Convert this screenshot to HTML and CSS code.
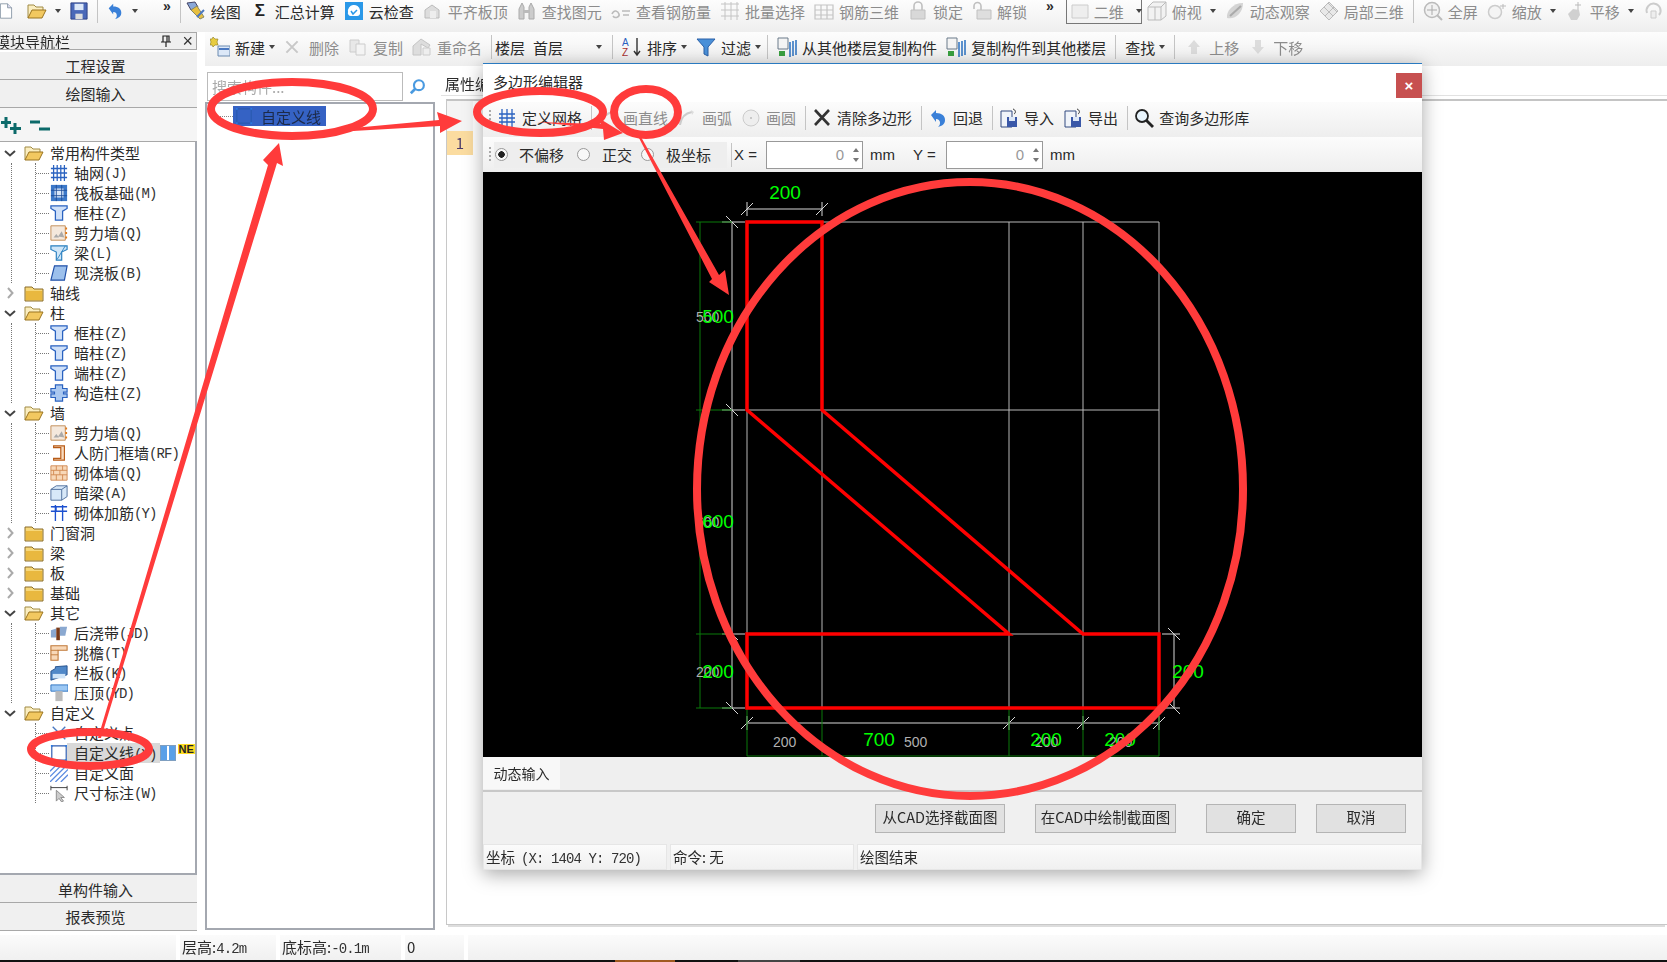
FILE: index.html
```html
<!DOCTYPE html>
<html lang="zh-CN">
<head>
  <meta charset="UTF-8" />
  <title>多边形编辑器</title>
  <link rel="stylesheet" href="styles.css">
</head>
<body>

<!-- icon sheet -->
<svg class="sheet" xmlns="http://www.w3.org/2000/svg">
  <symbol id="folder" viewBox="0 0 20 20"><path d="M1 4h7l2 2h9v12H1z" fill="#f6d77a" stroke="#8a6d2a"/><path d="M2 8h16v9H2z" fill="#e9b83f"/></symbol>
  <symbol id="folder-open" viewBox="0 0 20 20"><path d="M1 17V4h6l2 2h7v3" fill="#fbeec0" stroke="#a08a45"/><path d="M1 17l4-8h14l-4 8z" fill="#f2c860" stroke="#9a7420"/></symbol>
  <symbol id="chev-d" viewBox="0 0 12 12"><path d="M1 4l5 4.500L11 4" fill="none" stroke="#444" stroke-width="2"/></symbol>
  <symbol id="chev-r" viewBox="0 0 12 12"><path d="M4 1l4.500 5L4 11" fill="none" stroke="#aaa" stroke-width="2"/></symbol>
  <symbol id="plus2" viewBox="0 0 20 18"><path d="M5 1v11M0 6.500h10M14 7v11M9 12.500h11" stroke="#0c6a6a" stroke-width="3"/></symbol>
  <symbol id="minus2" viewBox="0 0 20 18"><path d="M0 6h10M9 13h11" stroke="#0c6a6a" stroke-width="3"/></symbol>
  <symbol id="grid" viewBox="0 0 20 20"><path d="M4 1v18M8 1v18M12 1v18M16 1v18M1 5h18M1 10h18M1 15h18" stroke="#2a62c0" stroke-width="1.400"/></symbol>
  <symbol id="raft" viewBox="0 0 20 20"><path d="M1 1h18v18H1z" fill="#3c78c8"/><path d="M5 5h10v10H5z" fill="#d8e6f8"/><path d="M1 7h18M1 13h18M7 1v18M13 1v18" stroke="#1c4c98"/></symbol>
  <symbol id="col" viewBox="0 0 20 20"><path d="M1 2h18v3l-5 3v10H6V8L1 5z" fill="#cfe0f8" stroke="#2a62c0" stroke-width="1.400"/></symbol>
  <symbol id="shear" viewBox="0 0 20 20"><path d="M1 2h16v16H1z" fill="#f4e8dc" stroke="#c08850"/><path d="M4 15l3-4 3 4zM9 14l4-6 3 7z" fill="#aaa"/><path d="M17 5h2M17 10h2M17 15h2" stroke="#e07818" stroke-width="2"/></symbol>
  <symbol id="beam" viewBox="0 0 20 20"><path d="M1 2h18v4l-6 3v9H7V9L1 6z" fill="#cfe6f8" stroke="#2a80c0" stroke-width="1.300"/><path d="M8 17l9-15" stroke="#2a80c0"/></symbol>
  <symbol id="slab" viewBox="0 0 20 20"><path d="M5 2h14l-3 16H1z" fill="#9cc0ec" stroke="#2050a8" stroke-width="1.300"/></symbol>
  <symbol id="cons" viewBox="0 0 20 20"><path d="M6 1h8v4h5v4h-4v2h4v4h-5v4H6v-4H1v-4h4V9H1V5h5z" fill="#aac8f0" stroke="#2a62c0" stroke-width="1.300"/></symbol>
  <symbol id="frame" viewBox="0 0 20 20"><path d="M4 2h12v16H4v-2h8V4H4z" fill="#f8dcc0" stroke="#b85c18" stroke-width="1.300"/></symbol>
  <symbol id="brick" viewBox="0 0 20 20"><path d="M1 2h18v16H1z" fill="#f8d8b8" stroke="#d08850"/><path d="M1 7h18M1 12h18M7 2v5M14 2v5M4 7v5M11 7v5M7 12v6M14 12v6" stroke="#d08850"/></symbol>
  <symbol id="hidden-beam" viewBox="0 0 20 20"><path d="M1 6l6-4h12v12l-6 4H1z" fill="#d8e8f8" stroke="#4a6a98"/><path d="M1 6h12v12M13 6l6-4" fill="none" stroke="#4a6a98"/></symbol>
  <symbol id="rebar" viewBox="0 0 20 20"><path d="M1 3h18M3 8h16M6 1v18M14 1v18M1 8h2" stroke="#1c50d0" stroke-width="1.500" fill="none"/><path d="M3 3h4v5" stroke="#1c50d0" fill="none"/></symbol>
  <symbol id="pour" viewBox="0 0 20 20"><path d="M1 7l6-2v10H1z" fill="#8aa8d0"/><path d="M7 4h4v14H7z" fill="#7a3a18"/><path d="M11 3h8l-2 10h-6z" fill="#8aa8d0"/></symbol>
  <symbol id="eave" viewBox="0 0 20 20"><path d="M1 2h18v5H9v11H1z" fill="#f8d8b8" stroke="#c07838" stroke-width="1.200"/><path d="M1 7h8M1 12h8" stroke="#c07838"/></symbol>
  <symbol id="rail" viewBox="0 0 20 20"><path d="M1 8l5-3v-2l13-1v10L1 18z" fill="#5088c8" stroke="#204c88"/><path d="M3 11h14v5H3z" fill="#cfe4f8"/></symbol>
  <symbol id="cap" viewBox="0 0 20 20"><path d="M1 1h19v7H1z" fill="#9cc8f4" stroke="#2a70c0"/><path d="M6 8h8v11H6z" fill="#bbb"/></symbol>
  <symbol id="pt" viewBox="0 0 20 20"><path d="M3 3l14 14M17 3L3 17" stroke="#4a78c0" stroke-width="1.500"/></symbol>
  <symbol id="shape" viewBox="0 0 20 20"><path d="M2 2h16v16H2z" fill="none" stroke="#2a5ab0" stroke-width="1.300"/><path d="M1 1h2v2H1zM17 1h2v2h-2zM1 17h2v2H1zM17 17h2v2h-2z" fill="#2a7ae0"/></symbol>
  <symbol id="hatch" viewBox="0 0 20 20"><path d="M0 8l8-8M0 14L14 0M0 20L20 0M6 20L20 6M12 20l8-8" stroke="#5a8ae0" stroke-width="1.400"/></symbol>
  <symbol id="dimen" viewBox="0 0 20 20"><path d="M1 2v5M19 2v5M1 4h18" stroke="#333"/><path d="M7 7v12l3-3 3 4 2-1-3-4h4z" fill="#ccc" stroke="#888"/></symbol>
  <symbol id="doc" viewBox="0 0 20 20"><path d="M3 1h9l5 5v13H3z" fill="#fff" stroke="#7a8a9a"/><path d="M12 1v5h5" fill="#dde" stroke="#7a8a9a"/></symbol>
  <symbol id="save" viewBox="0 0 20 20"><path d="M1 1h18v18H1z" fill="#4a68b8" stroke="#2a3c80"/><path d="M5 2h10v7H5z" fill="#dde8f8"/><path d="M6 13h8v6H6z" fill="#ddd"/></symbol>
  <symbol id="undo" viewBox="0 0 20 20"><path d="M3 7l5-5v3c6 0 9 3 9 7s-3 6-7 7c3-2 3-8-2-8v3z" fill="#3a80d8"/></symbol>
  <symbol id="draw" viewBox="0 0 20 20"><path d="M1 2l8-1 3 5-7 3z" fill="#8aa8d8" stroke="#446"/><path d="M5 9l9 9 4-2-7-11z" fill="#e8c040" stroke="#886"/><path d="M11 16l7-7" stroke="#4a78c0" stroke-width="2"/></symbol>
  <symbol id="cloud" viewBox="0 0 20 20"><path d="M1 1h18v18H1z" fill="#2a98e8"/><path d="M4 11a6 6 0 0 1 12-2v4a3 3 0 0 1-3 2H7a3 3 0 0 1-3-4z" fill="#fff"/><path d="M7 10l2 3 4-4" fill="none" stroke="#2a98e8" stroke-width="1.500"/></symbol>
  <symbol id="dim-tool" viewBox="0 0 20 20"><path d="M2 17V9l7-5 7 5v8z" fill="#ddd" stroke="#bbb"/><path d="M7 10h6v7H7z" fill="#eee"/></symbol>
  <symbol id="glasses" viewBox="0 0 20 20"><path d="M2 18V8l3-6 2 4v12zM12 18V6l2-4 3 6v10z" fill="#ccc" stroke="#aaa"/><path d="M7 9h5v3H7z" fill="#bbb"/></symbol>
  <symbol id="rebar-view" viewBox="0 0 20 20"><path d="M1 13c2-5 6-3 7 0s-4 5-6 2M11 10h8M12 14h6" fill="none" stroke="#bbb" stroke-width="1.600"/></symbol>
  <symbol id="batch" viewBox="0 0 20 20"><path d="M1 3h18M1 9h18M1 15h18M5 1v18M11 1v18M17 1v18" stroke="#c4c4c4"/></symbol>
  <symbol id="bars3d" viewBox="0 0 20 20"><path d="M1 4h18v14H1zM7 4v14M13 4v14M1 9h18M1 14h18" fill="none" stroke="#c4c4c4" stroke-width="1.200"/></symbol>
  <symbol id="lock" viewBox="0 0 20 20"><path d="M6 9V5a4 4 0 0 1 8 0v4" fill="none" stroke="#c0c0c0" stroke-width="1.600"/><path d="M3 9h14v9H3z" fill="#d8d8d8" stroke="#c0c0c0"/></symbol>
  <symbol id="unlock" viewBox="0 0 20 20"><path d="M2 8V5a3.500 3.500 0 0 1 7 0v4" fill="none" stroke="#c0c0c0" stroke-width="1.600"/><path d="M5 9h14v9H5z" fill="#dedede" stroke="#c0c0c0"/></symbol>
  <symbol id="box" viewBox="0 0 20 20"><path d="M2 4h16v13H2z" fill="#eee" stroke="#ccc"/></symbol>
  <symbol id="top-view" viewBox="0 0 20 20"><path d="M1 6l5-5h13v14l-5 4H1z" fill="#f2f2f2" stroke="#bbb"/><path d="M1 6h13v13M14 6l5-5M8 6v13" fill="none" stroke="#bbb"/></symbol>
  <symbol id="orbit" viewBox="0 0 20 20"><path d="M2 17C1 10 8 2 18 2c0 10-8 17-16 15z" fill="#d4d4d4"/><path d="M5 15L16 5" stroke="#aaa" stroke-width="2"/></symbol>
  <symbol id="local3d" viewBox="0 0 20 20"><path d="M10 1l9 9-9 9-9-9z" fill="#e8e8e8" stroke="#bbb"/><path d="M5 6l9 9M9 2l9 9M15 6l-9 9" stroke="#bbb"/></symbol>
  <symbol id="zoom-all" viewBox="0 0 20 20"><circle cx="9" cy="9" r="7.500" fill="#f2f2f2" stroke="#bbb" stroke-width="1.500"/><path d="M9 4v10M4 9h10" stroke="#aaa"/><path d="M14 14l5 5" stroke="#bbb" stroke-width="2"/></symbol>
  <symbol id="zoom-in" viewBox="0 0 20 20"><circle cx="8" cy="11" r="6.500" fill="#f4f4f4" stroke="#ccc" stroke-width="1.500"/><path d="M16 3v5M13 5h6" stroke="#bbb"/></symbol>
  <symbol id="pan" viewBox="0 0 20 20"><path d="M3 13l5-5 6 1 1 5-3 5H6z" fill="#d0d0d0"/><path d="M13 1v8M10 4h6" stroke="#bbb"/></symbol>
  <symbol id="spin" viewBox="0 0 20 20"><path d="M4 12a7 7 0 1 1 12 2" fill="none" stroke="#ccc" stroke-width="2"/><path d="M8 10h5v7H8z" fill="#eee" stroke="#ccc"/></symbol>
  <symbol id="new" viewBox="0 0 20 20"><path d="M3 0l2 2 3 0-1 3 1 3H5L3 10 2 8H0l1-3-1-3h2z" fill="#e8cc40" stroke="#8a7a20" stroke-width=".6"/><path d="M8 9h12v10H8z" fill="#dce8f8" stroke="#6a8ab0"/><path d="M9 12h10" stroke="#4a78c0" stroke-width="2"/></symbol>
  <symbol id="cross" viewBox="0 0 20 20"><path d="M3 3l14 14M17 3L3 17" stroke="#c8c8c8" stroke-width="2.500"/></symbol>
  <symbol id="copy" viewBox="0 0 20 20"><path d="M2 3h9v12H2z" fill="#e8e8e8" stroke="#ccc"/><path d="M8 7h9v11H8z" fill="#f4f4f4" stroke="#ccc"/></symbol>
  <symbol id="rename" viewBox="0 0 20 20"><path d="M1 18V9l8-7 9 6-2 3-7-4v11z" fill="#ddd" stroke="#c4c4c4"/><path d="M11 11h7v7h-7z" fill="#eee" stroke="#ccc"/></symbol>
  <symbol id="sort" viewBox="0 0 20 20"><text x="0" y="9" font-size="10" font-family="Liberation Sans" fill="#2a62c0">A</text><text x="0" y="19" font-size="10" font-family="Liberation Sans" fill="#a83030">Z</text><path d="M15 1v16M12 14l3 4 3-4" fill="none" stroke="#333" stroke-width="1.400"/></symbol>
  <symbol id="funnel" viewBox="0 0 20 20"><path d="M1 2h18l-7 8v9l-4-2v-7z" fill="#4a90d8" stroke="#2a60a8"/></symbol>
  <symbol id="layer-copy" viewBox="0 0 20 20"><path d="M1 1h10v11H1z" fill="#f4f4f4" stroke="#6a7a8a"/><path d="M13 5v15M16 4v15M19 3v15" stroke="#2a70c0" stroke-width="1.500"/><path d="M2 14h6v5H2z" fill="#3aa040"/></symbol>
  <symbol id="up" viewBox="0 0 20 20"><path d="M10 3l6 7h-3v7H7v-7H4z" fill="#dcdcdc"/></symbol>
  <symbol id="down" viewBox="0 0 20 20"><path d="M10 17l-6-7h3V3h6v7h3z" fill="#dcdcdc"/></symbol>
  <symbol id="pin" viewBox="0 0 12 12"><path d="M3 1h6v6H3zM1 7h10M6 7v5M7 1v6" fill="none" stroke="#222" stroke-width="1.200"/></symbol>
  <symbol id="search-blue" viewBox="0 0 20 20"><circle cx="11" cy="8" r="5.500" fill="none" stroke="#4a9ae0" stroke-width="2.400"/><path d="M7 12l-5 5" stroke="#4a9ae0" stroke-width="3"/></symbol>
  <symbol id="grid-blue" viewBox="0 0 20 20"><path d="M2 6h16M2 10h16M2 14h16M5 1v18M10 1v18M15 1v18" stroke="#2a62c0" stroke-width="1.300"/></symbol>
  <symbol id="clear" viewBox="0 0 20 20"><path d="M3 2l14 15M17 2L3 17" stroke="#333" stroke-width="2.600"/></symbol>
  <symbol id="arc" viewBox="0 0 20 20"><path d="M3 17C4 9 9 5 15 4" fill="none" stroke="#ccc" stroke-width="2"/><path d="M14 2l3 2-2 3z" fill="#ddd"/></symbol>
  <symbol id="circle" viewBox="0 0 20 20"><circle cx="10" cy="10" r="8" fill="#eee" stroke="#ccc"/><circle cx="10" cy="10" r="1" fill="#bbb"/></symbol>
  <symbol id="import" viewBox="0 0 20 20"><path d="M2 3h11v16H2z" fill="#f0f4fa" stroke="#334a80"/><path d="M8 9h10v10H8z" fill="#3a58a8"/><path d="M10 9h6v4h-6z" fill="#dde8f8"/><path d="M14 1c3 1 3 4 1 5" fill="none" stroke="#333"/></symbol>
  <symbol id="magnify" viewBox="0 0 20 20"><circle cx="8" cy="8" r="6" fill="#e8f4fc" stroke="#222" stroke-width="1.800"/><path d="M12 12l7 7" stroke="#222" stroke-width="2.800"/></symbol>
</svg>

<div class="screen">

  <div class="topbar">
    <svg class="ic doc"><use href="#doc"/></svg>
    <svg class="ic open"><use href="#folder-open"/></svg>
    <span class="caret"></span>
    <svg class="ic save"><use href="#save"/></svg>
    <span class="sep"></span>
    <svg class="ic undo"><use href="#undo"/></svg>
    <span class="caret"></span>
    <span class="more first">»</span>
    <span class="sep"></span>
    <div class="tool start"><svg class="ic"><use href="#draw"/></svg>绘图</div>
    <div class="tool"><span class="ic sigma">Σ</span>汇总计算</div>
    <div class="tool"><svg class="ic"><use href="#cloud"/></svg>云检查</div>
    <div class="tool off"><svg class="ic"><use href="#dim-tool"/></svg>平齐板顶</div>
    <div class="tool off"><svg class="ic"><use href="#glasses"/></svg>查找图元</div>
    <div class="tool off"><svg class="ic"><use href="#rebar-view"/></svg>查看钢筋量</div>
    <div class="tool off"><svg class="ic"><use href="#batch"/></svg>批量选择</div>
    <div class="tool off"><svg class="ic"><use href="#bars3d"/></svg>钢筋三维</div>
    <div class="tool off"><svg class="ic"><use href="#lock"/></svg>锁定</div>
    <div class="tool off"><svg class="ic"><use href="#unlock"/></svg>解锁</div>
    <span class="more second">»</span>
    <div class="view-box off"><svg class="ic"><use href="#box"/></svg>二维<span class="caret"></span></div>
    <div class="tool off"><svg class="ic"><use href="#top-view"/></svg>俯视</div><span class="caret"></span>
    <div class="tool off"><svg class="ic"><use href="#orbit"/></svg>动态观察</div>
    <div class="tool off"><svg class="ic"><use href="#local3d"/></svg>局部三维</div>
    <span class="sep"></span>
    <div class="tool off"><svg class="ic"><use href="#zoom-all"/></svg>全屏</div>
    <div class="tool off"><svg class="ic"><use href="#zoom-in"/></svg>缩放</div><span class="caret"></span>
    <div class="tool off"><svg class="ic"><use href="#pan"/></svg>平移</div><span class="caret"></span>
    <svg class="ic spin"><use href="#spin"/></svg>
  </div>

  <div class="main">
    <aside class="nav">
      <div class="nav-head"><span class="nav-title">模块导航栏</span><svg class="pin"><use href="#pin"/></svg><span class="nav-x">×</span></div>
      <div class="nav-btn">工程设置</div>
      <div class="nav-btn">绘图输入</div>
      <div class="nav-expand"><svg class="pm"><use href="#plus2"/></svg><svg class="pm"><use href="#minus2"/></svg></div>
      <div class="tree">

        <div class="row group"><svg class="chev"><use href="#chev-d"/></svg><svg class="ic"><use href="#folder-open"/></svg>常用构件类型</div>
        <div class="kids"><div class="kids-in">
          <div class="row"><i class="stub"></i><svg class="ic"><use href="#grid"/></svg>轴网<b>(J)</b></div>
          <div class="row"><i class="stub"></i><svg class="ic"><use href="#raft"/></svg>筏板基础<b>(M)</b></div>
          <div class="row"><i class="stub"></i><svg class="ic"><use href="#col"/></svg>框柱<b>(Z)</b></div>
          <div class="row"><i class="stub"></i><svg class="ic"><use href="#shear"/></svg>剪力墙<b>(Q)</b></div>
          <div class="row"><i class="stub"></i><svg class="ic"><use href="#beam"/></svg>梁<b>(L)</b></div>
          <div class="row"><i class="stub"></i><svg class="ic"><use href="#slab"/></svg>现浇板<b>(B)</b></div>
        </div></div>
        <div class="row group"><svg class="chev"><use href="#chev-r"/></svg><svg class="ic"><use href="#folder"/></svg>轴线</div>

        <div class="row group"><svg class="chev"><use href="#chev-d"/></svg><svg class="ic"><use href="#folder-open"/></svg>柱</div>
        <div class="kids"><div class="kids-in">
          <div class="row"><i class="stub"></i><svg class="ic"><use href="#col"/></svg>框柱<b>(Z)</b></div>
          <div class="row"><i class="stub"></i><svg class="ic"><use href="#col"/></svg>暗柱<b>(Z)</b></div>
          <div class="row"><i class="stub"></i><svg class="ic"><use href="#col"/></svg>端柱<b>(Z)</b></div>
          <div class="row"><i class="stub"></i><svg class="ic"><use href="#cons"/></svg>构造柱<b>(Z)</b></div>
        </div></div>

        <div class="row group"><svg class="chev"><use href="#chev-d"/></svg><svg class="ic"><use href="#folder-open"/></svg>墙</div>
        <div class="kids"><div class="kids-in">
          <div class="row"><i class="stub"></i><svg class="ic"><use href="#shear"/></svg>剪力墙<b>(Q)</b></div>
          <div class="row"><i class="stub"></i><svg class="ic"><use href="#frame"/></svg>人防门框墙<b>(RF)</b></div>
          <div class="row"><i class="stub"></i><svg class="ic"><use href="#brick"/></svg>砌体墙<b>(Q)</b></div>
          <div class="row"><i class="stub"></i><svg class="ic"><use href="#hidden-beam"/></svg>暗梁<b>(A)</b></div>
          <div class="row"><i class="stub"></i><svg class="ic"><use href="#rebar"/></svg>砌体加筋<b>(Y)</b></div>
        </div></div>

        <div class="row group"><svg class="chev"><use href="#chev-r"/></svg><svg class="ic"><use href="#folder"/></svg>门窗洞</div>
        <div class="row group"><svg class="chev"><use href="#chev-r"/></svg><svg class="ic"><use href="#folder"/></svg>梁</div>
        <div class="row group"><svg class="chev"><use href="#chev-r"/></svg><svg class="ic"><use href="#folder"/></svg>板</div>
        <div class="row group"><svg class="chev"><use href="#chev-r"/></svg><svg class="ic"><use href="#folder"/></svg>基础</div>

        <div class="row group"><svg class="chev"><use href="#chev-d"/></svg><svg class="ic"><use href="#folder-open"/></svg>其它</div>
        <div class="kids"><div class="kids-in">
          <div class="row"><i class="stub"></i><svg class="ic"><use href="#pour"/></svg>后浇带<b>(JD)</b></div>
          <div class="row"><i class="stub"></i><svg class="ic"><use href="#eave"/></svg>挑檐<b>(T)</b></div>
          <div class="row"><i class="stub"></i><svg class="ic"><use href="#rail"/></svg>栏板<b>(K)</b></div>
          <div class="row"><i class="stub"></i><svg class="ic"><use href="#cap"/></svg>压顶<b>(YD)</b></div>
        </div></div>

        <div class="row group"><svg class="chev"><use href="#chev-d"/></svg><svg class="ic"><use href="#folder-open"/></svg>自定义</div>
        <div class="kids last"><div class="kids-in">
          <div class="row"><i class="stub"></i><svg class="ic"><use href="#pt"/></svg>自定义点</div>
          <div class="row"><i class="stub"></i><svg class="ic"><use href="#shape"/></svg><span class="picked">自定义线<b>(Y)</b></span><span class="mini"></span><span class="ne">NE</span></div>
          <div class="row"><i class="stub"></i><svg class="ic"><use href="#hatch"/></svg>自定义面</div>
          <div class="row"><i class="stub"></i><svg class="ic"><use href="#dimen"/></svg>尺寸标注<b>(W)</b></div>
        </div></div>
      </div>
      <div class="nav-btn">单构件输入</div>
      <div class="nav-btn">报表预览</div>
    </aside>

    <div class="content">
      <div class="subbar">
        <div class="tool on"><svg class="ic"><use href="#new"/></svg>新建</div><span class="caret near"></span>
        <div class="tool off"><svg class="ic"><use href="#cross"/></svg>删除</div>
        <div class="tool off"><svg class="ic"><use href="#copy"/></svg>复制</div>
        <div class="tool off"><svg class="ic"><use href="#rename"/></svg>重命名</div>
        <span class="sep"></span>
        <span class="floor-label">楼层</span>
        <div class="floor-select">首层<span class="caret"></span></div>
        <span class="sep"></span>
        <div class="tool"><svg class="ic"><use href="#sort"/></svg>排序</div><span class="caret near"></span>
        <div class="tool"><svg class="ic"><use href="#funnel"/></svg>过滤</div><span class="caret near"></span>
        <span class="sep tight"></span>
        <div class="tool"><svg class="ic"><use href="#layer-copy"/></svg>从其他楼层复制构件</div>
        <div class="tool"><svg class="ic"><use href="#layer-copy"/></svg>复制构件到其他楼层</div>
        <span class="sep"></span>
        <span class="find">查找</span><span class="caret near"></span>
        <span class="sep"></span>
        <div class="tool off"><svg class="ic"><use href="#up"/></svg>上移</div>
        <div class="tool off"><svg class="ic"><use href="#down"/></svg>下移</div>
      </div>

      <div class="panes">
        <section class="comp">
          <div class="search"><span class="search-box">搜索构件...</span><svg class="search-ic"><use href="#search-blue"/></svg></div>
          <div class="list">
            <div class="list-item"><i class="list-stub"></i><span class="list-sel"><svg class="ic"><use href="#shape"/></svg>自定义线</span></div>
          </div>
        </section>
        <section class="work">
          <div class="tabs"><span class="tab">属性编辑</span></div>
          <div class="prop">
            <div class="prop-head"></div>
            <div class="prop-num">1</div>
          </div>
        </section>
      </div>
    </div>
  </div>

  <div class="status">
    <span class="cell c-a"></span>
    <span class="cell c-b">层高:<b>4.2m</b></span>
    <span class="cell c-c">底标高:<b>-0.1m</b></span>
    <span class="cell c-d">0</span>
    <span class="cell c-e"></span>
  </div>
  <div class="taskbar"><i class="task-a"></i><i class="task-b"></i></div>

  <!-- polygon editor window -->
  <div class="dialog">
    <div class="dlg-title"><span>多边形编辑器</span><span class="dlg-close">×</span></div>

    <div class="dlg-tools">
      <i class="grip"></i>
      <div class="tool first"><svg class="ic"><use href="#grid-blue"/></svg>定义网格</div>
      <span class="sep"></span>
      <div class="tool off"><svg class="ic"><use href="#arc"/></svg>画直线</div>
      <div class="tool off"><svg class="ic"><use href="#arc"/></svg>画弧</div>
      <div class="tool off"><svg class="ic"><use href="#circle"/></svg>画圆</div>
      <span class="sep"></span>
      <div class="tool"><svg class="ic"><use href="#clear"/></svg>清除多边形</div>
      <span class="sep"></span>
      <div class="tool"><svg class="ic"><use href="#undo"/></svg>回退</div>
      <span class="sep"></span>
      <div class="tool"><svg class="ic"><use href="#import"/></svg>导入</div>
      <div class="tool"><svg class="ic"><use href="#import"/></svg>导出</div>
      <span class="sep"></span>
      <div class="tool"><svg class="ic"><use href="#magnify"/></svg>查询多边形库</div>
    </div>

    <div class="dlg-opts">
      <i class="grip"></i>
      <div class="opt-group">
        <label class="opt"><i class="radio on"></i>不偏移</label>
        <label class="opt"><i class="radio"></i>正交</label>
        <label class="opt"><i class="radio"></i>极坐标</label>
      </div>
      <span class="sep"></span>
      <span class="coord-label">X =</span>
      <div class="num">0<span class="spin-btns"><i></i><i></i></span></div>
      <span class="unit">mm</span>
      <span class="coord-label y">Y =</span>
      <div class="num">0<span class="spin-btns"><i></i><i></i></span></div>
      <span class="unit">mm</span>
    </div>

    <div class="canvas">
      <svg class="drawing" viewBox="483 172 939 585" xmlns="http://www.w3.org/2000/svg">
        <g class="guide">
          <path d="M747 222H1159M747 410H1159M747 634H1159M747 708H1159"/>
          <path d="M747 222V708M822 222V708M1009 222V708M1083 222V708M1159 222V708"/>
        </g>
        <g class="dim">
          <path d="M747 209H822M747 202V216M822 202V216M741 215L753 203M816 215L828 203"/>
          <path d="M732 222V708M722 222H745M722 410H745M722 634H745M722 708H745M726 216L738 228M726 404L738 416M726 628L738 640M726 702L738 714"/>
          <path d="M747 723H1159M747 716V730M1009 716V730M1083 716V730M1159 716V730M741 729L753 717M1003 729L1015 717M1077 729L1089 717M1153 729L1165 717"/>
          <path d="M1174 634V708M1162 634H1180M1162 708H1180M1168 628L1180 640M1168 702L1180 714"/>
        </g>
        <g class="dim-green">
          <path d="M700 222V708M696 222H732M696 410H732M696 634H732M696 708H732"/>
          <path d="M747 708V756M822 708V756M1009 708V756M1083 708V756M1159 708V756M747 756H1159"/>
        </g>
        <path class="poly" d="M747 222H822V410L1083 634H1159V708H747V634H1009L747 410Z"/>
        <g class="small">
          <text x="696" y="322">500</text>
          <text x="696" y="527">600</text>
          <text x="696" y="677">200</text>
          <text x="773" y="747">200</text>
          <text x="904" y="747">500</text>
          <text x="1035" y="747">200</text>
          <text x="1109" y="747">200</text>
        </g>
        <g class="big">
          <text x="785" y="199">200</text>
          <text x="718" y="323">500</text>
          <text x="718" y="528">600</text>
          <text x="718" y="678">200</text>
          <text x="1188" y="678">200</text>
          <text x="879" y="746">700</text>
          <text x="1046" y="746">200</text>
          <text x="1120" y="746">200</text>
        </g>
      </svg>
    </div>

    <div class="dyn"><span class="dyn-tab">动态输入</span></div>

    <div class="dlg-actions">
      <span class="btn b-a">从CAD选择截面图</span>
      <span class="btn b-b">在CAD中绘制截面图</span>
      <span class="btn b-c">确定</span>
      <span class="btn b-c">取消</span>
    </div>

    <div class="dlg-status">
      <span class="dcell d-a">坐标<b>(X: 1404 Y: 720)</b></span>
      <span class="dcell d-a">命令: 无</span>
      <span class="dcell d-b">绘图结束</span>
    </div>
  </div>

  <!-- red hand-drawn notes lying over the whole window -->
  <svg class="marks" viewBox="0 0 1667 962" xmlns="http://www.w3.org/2000/svg">
    <g class="ring">
      <ellipse cx="292" cy="109" rx="81" ry="27"/>
      <ellipse cx="540" cy="112" rx="63" ry="21"/>
      <ellipse cx="646" cy="112" rx="32" ry="23"/>
      <ellipse cx="90" cy="749" rx="59" ry="17"/>
      <ellipse cx="970" cy="489" rx="273" ry="307"/>
    </g>
    <g class="arrow">
      <path d="M98 738L268 165 263 160 279 143 283 166 277 163 101 738Z"/>
      <path d="M353 128L439 120 437 112 462 121 440 133 440 126 353 131Z"/>
      <path d="M537 122L601 124 597 117 623 133 604 140 603 129Z"/>
      <path d="M639 138L712 279 709 282 729 295 725 270 719 275 641 137Z"/>
    </g>
  </svg>
</div>

</body>
</html>
```

FILE: styles.css
```css
html, body {
  margin: 0;
  height: 100%;
  overflow: hidden;
}

body {
  font-family: "Noto Sans CJK SC", "Liberation Sans", sans-serif;
  font-size: 15px;
  color: #2a2a2a;
  background: #fff;
}

.sheet {
  display: none;
}

.screen {
  position: relative;
  width: 1667px;
  height: 962px;
  display: flex;
  flex-direction: column;
  overflow: hidden;
  filter: blur(.4px);
}

.ic {
  width: 20px;
  height: 20px;
  flex: none;
}

/* toolbars */
.topbar, .subbar, .dlg-tools, .dlg-opts {
  display: flex;
  align-items: center;
  white-space: nowrap;
  box-sizing: border-box;
}

.topbar {
  height: 32px;
  padding-bottom: 10px;
  flex: none;
  background: linear-gradient(#fdfdfd, #eeeeee);
}

.tool {
  display: flex;
  align-items: center;
  gap: 5px;
  margin-left: 9px;
  flex: none;
}

.tool.off, .view-box.off {
  color: #8c8c8c;
}

.tool.start {
  margin-left: 5px;
}

.sep {
  width: 1px;
  height: 24px;
  margin-left: 9px;
  background: #c4c4c4;
  flex: none;
}

.sep.tight {
  margin-left: 6px;
}

.caret {
  width: 0;
  height: 0;
  margin-left: 8px;
  border: 3.5px solid transparent;
  border-top: 4px solid #444;
  border-bottom: 0;
  flex: none;
}

.caret.near {
  margin-left: 4px;
}

.more {
  font: bold 14px "Liberation Sans", sans-serif;
  align-self: flex-start;
  margin-top: -2px;
  flex: none;
}

.more.first { margin-left: 25px; }
.more.second { margin-left: 19px; }

.doc { width: 16px; margin-left: -2px; }
.open { margin-left: 13px; }
.save { width: 18px; margin-left: 9px; }
.undo { width: 18px; margin-left: 8px; }
.spin { margin-left: 9px; }

.sigma {
  font: bold 17px/20px "Liberation Sans", sans-serif;
  text-align: center;
  color: #222;
}

.view-box {
  display: flex;
  align-items: center;
  gap: 4px;
  width: 76px;
  height: 26px;
  margin: 0 -4px 0 12px;
  padding-left: 3px;
  border: 1px solid #777;
  box-sizing: border-box;
  flex: none;
}

/* page body */
.main {
  display: flex;
  flex: 1;
  min-height: 0;
}

.nav {
  width: 197px;
  flex: none;
  display: flex;
  flex-direction: column;
  height: 899px;
}

.nav-head {
  display: flex;
  align-items: center;
  height: 18px;
  overflow: hidden;
  background: #efefef;
  border: 1px solid #a8a8a8;
  border-left: 0;
  box-sizing: border-box;
}

.nav-title {
  margin-left: -5px;
  flex: 1;
}

.pin {
  width: 12px;
  height: 12px;
  margin-right: 10px;
}

.nav-x {
  font: 18px "Liberation Sans", sans-serif;
  margin-right: 3px;
  color: #333;
}

.nav-btn {
  height: 27px;
  line-height: 27px;
  padding-right: 6px;
  text-align: center;
  background: #f0f0f0;
  border-bottom: 1px solid #a8a8a8;
}

.nav-head + .nav-btn {
  margin-top: 2px;
}

.tree + .nav-btn {
  line-height: 29px;
}

.nav-expand {
  display: flex;
  align-items: center;
  gap: 9px;
  height: 33px;
  padding-left: 1px;
  background: #f5f5f5;
}

.pm {
  width: 20px;
  height: 18px;
}

.tree {
  flex: 1;
  background: #fff;
  border-top: 1px solid #a8a8a8;
  border-right: 2px solid #a4a8b0;
  border-bottom: 2px solid #a4a8b0;
  padding-top: 1px;
  overflow: hidden;
}

.row {
  display: flex;
  align-items: center;
  height: 20px;
  line-height: 20px;
  white-space: nowrap;
}

.row b, .dcell b, .cell b {
  font: 14px "Liberation Mono", monospace;
  letter-spacing: -.9px;
  color: #333;
}

.row b {
  margin-top: 2px;
}

.group .chev {
  width: 12px;
  height: 12px;
  margin: 0 8px 0 4px;
  flex: none;
}

.group .ic {
  margin-right: 6px;
}

.kids {
  margin-left: 11px;
  border-left: 1px dotted #777;
  padding-left: 23px;
}

.kids.last {
  border-left-color: transparent;
}

.kids-in {
  border-left: 1px dotted #777;
  margin-bottom: 10px;
}

.kids-in .row:last-child {
  margin-bottom: -10px;
}

.stub {
  width: 13px;
  margin-right: 1px;
  border-top: 1px dotted #777;
  flex: none;
}

.kids-in .ic {
  width: 18px;
  height: 18px;
  margin-right: 6px;
}

.picked {
  background: #d9d9d9;
  margin-left: -7px;
  padding: 0 3px 0 7px;
}

.mini {
  width: 16px;
  height: 16px;
  background: linear-gradient(90deg, #5aa0e8 40%, #fff 40%, #fff 60%, #5aa0e8 60%);
  border: 1px solid #7f9fc0;
  box-sizing: border-box;
  flex: none;
}

.ne {
  font: bold 11px "Liberation Sans", sans-serif;
  background: #ffdd22;
  color: #222;
  line-height: 10px;
  padding: 0 1px;
  margin: -8px 0 0 2px;
}

.content {
  flex: 1;
  min-width: 0;
  margin-left: 8px;
  display: flex;
  flex-direction: column;
}

.subbar {
  height: 34px;
  padding-bottom: 4px;
  flex: none;
  background: linear-gradient(#fdfdfd, #eeeeee);
}

.subbar .tool.on {
  margin-left: 5px;
}

.subbar .off:nth-child(3) .ic {
  width: 16px;
  margin-right: 4px;
}

.floor-label {
  margin-left: 3px;
}

.floor-select {
  display: flex;
  align-items: center;
  justify-content: space-between;
  width: 70px;
  margin-left: 8px;
  padding-right: 1px;
  box-sizing: border-box;
}

.find {
  margin-left: 9px;
}

.panes {
  display: flex;
  flex: 1;
  min-height: 0;
  padding-top: 5px;
  height: 826px;
}

.comp {
  width: 230px;
  flex: none;
  display: flex;
  flex-direction: column;
  height: 859px;
}

.search {
  display: flex;
  align-items: center;
  height: 31px;
  padding-left: 2px;
}

.search-box {
  width: 196px;
  height: 29px;
  line-height: 27px;
  padding-left: 4px;
  box-sizing: border-box;
  border: 1px solid #bbb;
  color: #aaa;
  overflow: hidden;
}

.search-ic {
  width: 18px;
  height: 18px;
  margin-left: 6px;
}

.list {
  flex: 1;
  background: #fff;
  border: 2px solid #a4a8b0;
  padding-top: 1px;
}

.list-item {
  display: flex;
  align-items: center;
  height: 22px;
  padding-left: 10px;
}

.list-stub {
  width: 16px;
  border-top: 1px dotted #888;
}

.list-sel {
  display: flex;
  align-items: center;
  gap: 8px;
  height: 20px;
  padding: 0 5px 0 2px;
  background: #3562c4;
  color: #1c2a48;
}

.list-sel .ic {
  width: 18px;
  height: 18px;
}

.work {
  flex: 1;
  margin-left: 6px;
  height: 854px;
  display: flex;
  flex-direction: column;
}

.tabs {
  height: 22px;
  padding-top: 2px;
  border-bottom: 1px solid #e2e2e2;
}

.tab {
  display: block;
  margin-left: 4px;
  white-space: nowrap;
}

.prop {
  flex: 1;
  border: 1px solid #c8c8c8;
  border-top: 2px solid #c4c4c4;
  margin-top: 3px;
  margin-left: 5px;
  border-right: 0;
  box-shadow: 0 4px 0 -2px #ddd;
}

.prop-head {
  height: 30px;
  width: 26px;
  background: #f4f4f4;
}

.prop-num {
  width: 26px;
  height: 24px;
  line-height: 24px;
  text-align: center;
  background: #fbdca0;
  color: #4a3a6a;
}

.status {
  display: flex;
  gap: 4px;
  height: 25px;
  margin-top: 5px;
  flex: none;
}

.cell {
  line-height: 24px;
  padding-left: 2px;
  background: linear-gradient(#fbfbfb, #f0f0f0);
  box-sizing: border-box;
  white-space: nowrap;
}

.c-a { width: 176px; }
.c-b { width: 96px; }
.c-c { width: 121px; }
.c-d { width: 59px; }
.c-e { flex: 1; }

.taskbar {
  height: 2px;
  display: flex;
  background: #111;
  flex: none;
}

.task-a {
  width: 60px;
  margin-left: 615px;
  background: #a05a20;
}

.task-b {
  width: 62px;
  margin-left: 63px;
  background: #444;
}

/* polygon editor window */
.dialog {
  position: absolute;
  left: 483px;
  top: 63px;
  width: 939px;
  height: 807px;
  display: flex;
  flex-direction: column;
  background: #f0f0f0;
  border-top: 1px solid #2a7ac0;
  box-sizing: border-box;
  box-shadow: 0 4px 18px rgba(0,0,0,.35);
}

.dlg-title {
  display: flex;
  justify-content: space-between;
  height: 38px;
  padding: 8px 0 0 10px;
  box-sizing: border-box;
  background: #fff;
  line-height: 20px;
}

.dlg-close {
  width: 26px;
  height: 25px;
  margin-top: 1px;
  text-align: center;
  font: bold 15px/25px "Liberation Sans", sans-serif;
  color: #fff;
  background: #c75050;
}

.dlg-tools {
  height: 35px;
  padding-bottom: 4px;
  flex: none;
  background: linear-gradient(#fcfcfc, #eeeeee);
}

.dlg-tools .tool.first {
  margin-left: 6px;
}

.dlg-tools .sep + .tool {
  margin-left: 6px;
}

.grip {
  width: 2px;
  height: 16px;
  margin-left: 6px;
  background: repeating-linear-gradient(#aaa 0 2px, transparent 2px 4px);
  flex: none;
}

.dlg-opts {
  height: 35px;
  flex: none;
  background: linear-gradient(#fcfcfc, #eeeeee);
}

.opt-group {
  display: flex;
  align-items: center;
  width: 233px;
  height: 26px;
  margin-left: 3px;
  background: #eeeeee;
  padding-left: 1px;
  box-sizing: border-box;
  flex: none;
}

.opt {
  display: flex;
  align-items: center;
  gap: 11px;
  margin-right: 13px;
}

.opt + .opt {
  gap: 12px;
  margin-right: 9px;
}

.radio {
  width: 13px;
  height: 13px;
  border: 1px solid #999;
  border-radius: 50%;
  background: #f8f8f8;
  box-sizing: border-box;
  flex: none;
}

.radio.on {
  background: radial-gradient(#222 3px, #f8f8f8 3.5px);
}

.dlg-opts .sep {
  margin-left: 4px;
}

.coord-label {
  font-family: "Liberation Sans", sans-serif;
  margin-left: 2px;
  width: 32px;
  flex: none;
}

.coord-label.y {
  margin-left: 17px;
  width: 33px;
}

.num {
  display: flex;
  align-items: center;
  justify-content: flex-end;
  gap: 9px;
  width: 97px;
  height: 28px;
  padding-right: 3px;
  box-sizing: border-box;
  background: #fff;
  border: 1px solid #999;
  color: #999;
  font-family: "Liberation Sans", sans-serif;
  flex: none;
}

.spin-btns {
  display: flex;
  flex-direction: column;
  gap: 6px;
}

.spin-btns i {
  width: 0;
  height: 0;
  border: 3px solid transparent;
  border-bottom: 4px solid #777;
  border-top: 0;
}

.spin-btns i + i {
  border-top: 4px solid #777;
  border-bottom: 0;
}

.unit {
  font-family: "Liberation Sans", sans-serif;
  margin-left: 7px;
  width: 26px;
  flex: none;
}

.canvas {
  height: 585px;
  flex: none;
  background: #000;
}

.drawing {
  display: block;
  width: 939px;
  height: 585px;
}

.guide path {
  fill: none;
  stroke: #b8b8b8;
  stroke-width: 1;
}

.dim path {
  fill: none;
  stroke: #d8d8d8;
  stroke-width: 1;
}

.dim-green path {
  fill: none;
  stroke: #0a7a0a;
  stroke-width: 1;
}

.poly {
  fill: none;
  stroke: #ff0000;
  stroke-width: 3.500;
}

.small text {
  font: 14px "Liberation Sans", sans-serif;
  fill: #b0b0b0;
}

.big text {
  font: 19px "Liberation Sans", sans-serif;
  fill: #00ff00;
  text-anchor: middle;
}

.dyn {
  height: 35px;
  flex: none;
  border-bottom: 2px solid #c8c8c8;
  box-sizing: border-box;
  background: #efefef;
}

.dyn-tab {
  display: block;
  width: 77px;
  height: 32px;
  line-height: 32px;
  text-align: center;
  background: #f8f8f8;
  font-size: 14px;
}

.dlg-actions {
  display: flex;
  align-items: center;
  justify-content: flex-end;
  height: 52px;
  padding-right: 16px;
  flex: none;
}

.btn {
  height: 29px;
  line-height: 24px;
  text-align: center;
  font-size: 14.500px;
  background: #e1e1e1;
  border: 1px solid #b4b4b4;
  box-sizing: border-box;
  margin-left: 30px;
  white-space: nowrap;
}

.b-a { width: 130px; }
.b-b { width: 141px; }
.b-c { width: 90px; }
.b-c + .b-c { margin-left: 20px; }

.dlg-status {
  display: flex;
  gap: 3px;
  flex: 1;
}

.dcell {
  line-height: 24px;
  padding-left: 2px;
  box-sizing: border-box;
  background: linear-gradient(#fbfbfb, #f0f0f0);
  border: 1px solid #e6e6e6;
  white-space: nowrap;
  font-size: 14.500px;
}

.dcell b { margin-left: 6px; }
.d-a { width: 184px; }
.d-b { flex: 1; }

/* notes on top of everything */
.marks {
  position: absolute;
  left: 0;
  top: 0;
  width: 1667px;
  height: 962px;
  pointer-events: none;
}

.ring ellipse {
  fill: none;
  stroke: #ff3b3b;
  stroke-width: 8;
}

.arrow path {
  fill: #ff3b3b;
}
```
